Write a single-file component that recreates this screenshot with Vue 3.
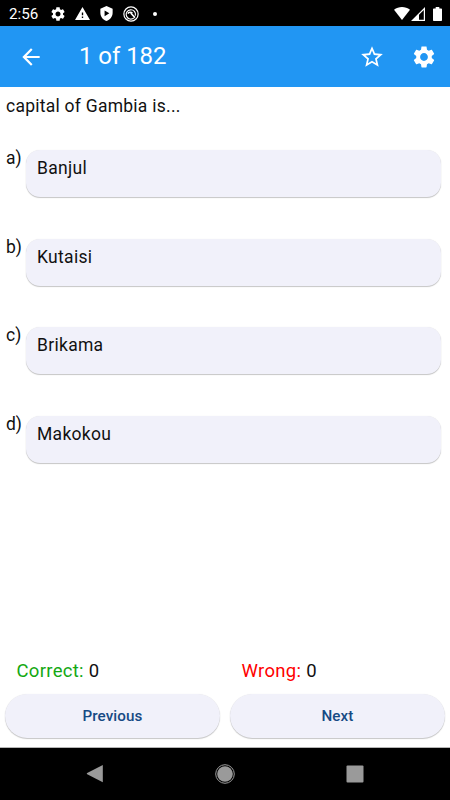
<template>
  <div class="screen">
    <div class="status-bar">
      <span class="clock">2:56</span>
      <svg class="status-icon gear" viewBox="2 2 20 20"><path :d="gearPath" /></svg>
      <svg class="status-icon warning" viewBox="1 2 22 19"><path d="M1 21h22L12 2 1 21zm12-3h-2v-2h2v2zm0-4h-2v-4h2v4z" /></svg>
      <svg class="status-icon shield" viewBox="3 1 18 22"><path fill-rule="evenodd" d="M12 1 3 5v6c0 5.550 3.840 10.740 9 12 5.160-1.260 9-6.450 9-12V5l-9-4zM9.200 7.500v8.500l7-4.250z" /></svg>
      <svg class="status-icon radar" viewBox="0 0 24 24">
        <circle cx="12" cy="12" r="10.700" />
        <path d="M16.500 17.800A7 7 0 1 1 18.500 14.500" />
        <path class="sweep" d="M11.500 10.500l6.500 7M7.500 11.500c1-2.500 4.500-3 6.500-.5" />
      </svg>
      <span class="dot"></span>
      <svg class="status-icon wifi" viewBox="0 0 16 13"><path d="M0 2.800C4.600-.8 11.400-.8 16 2.800L8 13z" /></svg>
      <svg class="status-icon signal" viewBox="0 0 14 14">
        <path fill-rule="evenodd" d="M0 14 14 0v14zM8 7.700v5.100h4.800V2.900z" />
      </svg>
      <svg class="status-icon battery" viewBox="0 0 9 14"><path d="M2.700 0h3.600v1.500H8.200a.8.800 0 0 1 .8.800v10.900a.8.800 0 0 1-.8.800H.8a.8.800 0 0 1-.8-.8V2.300a.8.800 0 0 1 .8-.8h1.900z" /></svg>
    </div>

    <header class="app-bar">
      <svg class="icon" viewBox="0 0 24 24"><path d="M20 11H7.830l5.590-5.590L12 4l-8 8 8 8 1.410-1.410L7.830 13H20v-2z" /></svg>
      <h1 class="title">{{ current }} of {{ total }}</h1>
      <svg class="icon star" viewBox="0 0 24 24"><path d="M22 9.240l-7.190-.62L12 2 9.190 8.630 2 9.240l5.460 4.730L5.820 21 12 17.270 18.180 21l-1.630-7.030L22 9.240zM12 15.400l-3.760 2.270 1-4.280-3.320-2.880 4.380-.38L12 6.100l1.710 4.040 4.380.38-3.320 2.880 1 4.280L12 15.400z" /></svg>
      <svg class="icon" viewBox="0 0 24 24"><path :d="gearPath" /></svg>
    </header>

    <main class="quiz">
      <p class="question">capital of Gambia is...</p>
      <div v-for="option in options" :key="option.key" class="option">
        <span class="option-key">{{ option.key }})</span>
        <div class="option-card">{{ option.text }}</div>
      </div>
    </main>

    <footer class="footer">
      <div class="scores">
        <div class="score"><span class="correct">Correct:</span> {{ correct }}</div>
        <div class="score"><span class="wrong">Wrong:</span> {{ wrong }}</div>
      </div>
      <div class="buttons">
        <button class="button" @click="previous">Previous</button>
        <button class="button" @click="next">Next</button>
      </div>
    </footer>

    <nav class="nav-bar">
      <svg viewBox="0 0 20 20"><path d="M17.800 1v17.200L2.200 10.300a.7.700 0 0 1 0-1.200z" /></svg>
      <svg viewBox="0 0 20 20">
        <circle cx="10" cy="10" r="7.800" />
        <circle class="ring" cx="10" cy="10" r="9.300" />
      </svg>
      <svg viewBox="0 0 20 20"><rect x="1.500" y="1.500" width="17" height="17" rx="1" /></svg>
    </nav>
  </div>
</template>

<script setup>
import { ref } from 'vue'

const total = 182
const current = ref(1)
const correct = ref(0)
const wrong = ref(0)

const options = [
  { key: 'a', text: 'Banjul' },
  { key: 'b', text: 'Kutaisi' },
  { key: 'c', text: 'Brikama' },
  { key: 'd', text: 'Makokou' }
]

// shared by the status bar and the app bar
const gearPath = 'M19.140 12.940c.04-.3.06-.61.06-.94 0-.32-.02-.64-.07-.94l2.030-1.580c.18-.14.23-.41.12-.61l-1.920-3.320c-.12-.22-.37-.29-.59-.22l-2.390.96c-.5-.38-1.030-.7-1.620-.94l-.36-2.540c-.04-.24-.24-.41-.48-.41h-3.840c-.24 0-.43.17-.47.41l-.36 2.540c-.59.24-1.130.57-1.620.94l-2.390-.96c-.22-.08-.47 0-.59.22L2.740 8.870c-.12.21-.08.47.12.61l2.030 1.580c-.05.3-.09.63-.09.94s.02.64.07.94l-2.030 1.580c-.18.14-.23.41-.12.61l1.920 3.320c.12.22.37.29.59.22l2.390-.96c.5.38 1.030.7 1.620.94l.36 2.540c.05.24.24.41.48.41h3.840c.24 0 .44-.17.47-.41l.36-2.540c.59-.24 1.130-.56 1.620-.94l2.390.96c.22.08.47 0 .59-.22l1.920-3.320c.12-.22.07-.47-.12-.61l-2.010-1.580zM12 15.600c-1.980 0-3.600-1.620-3.600-3.600s1.620-3.600 3.600-3.600 3.600 1.620 3.600 3.600-1.620 3.600-3.600 3.600z'

function previous() {
  if (current.value > 1) current.value--
}

function next() {
  if (current.value < total) current.value++
}
</script>

<style>
body {
  margin: 0;
}
</style>

<style scoped>
.screen {
  display: flex;
  flex-direction: column;
  width: 450px;
  height: 800px;
  overflow: hidden;
  background: #fff;
  color: #111;
  font-family: Roboto, sans-serif;
  font-size: 17.500px;
  letter-spacing: 0.300px;
}

.status-bar {
  display: flex;
  align-items: center;
  box-sizing: border-box;
  height: 26px;
  padding: 1px 8px 0 9px;
  background: #000;
  color: #fff;
}

.clock {
  width: 42px;
  font-size: 15.200px;
  letter-spacing: 0;
}

.status-icon {
  flex: none;
  fill: #fff;
}

.gear {
  width: 14px;
  height: 14px;
}

.warning {
  width: 15px;
  height: 13px;
  margin-left: 9.500px;
}

.shield {
  width: 13px;
  height: 15px;
  margin-left: 10px;
}

.radar {
  width: 16px;
  height: 16px;
  margin-left: 10px;
  fill: none;
  stroke: #fff;
  stroke-width: 1.800;
}

.radar .sweep {
  stroke-width: 2.400;
}

.dot {
  width: 4px;
  height: 4px;
  margin-left: 14px;
  border-radius: 50%;
  background: #fff;
}

.wifi {
  width: 16px;
  height: 13px;
  margin-left: auto;
}

.signal {
  width: 14px;
  height: 14px;
  margin-left: 1px;
}

.battery {
  width: 9px;
  height: 14px;
  margin-left: 8px;
}

.app-bar {
  display: flex;
  align-items: center;
  box-sizing: border-box;
  height: 61px;
  padding: 0 13px 0 18px;
  background: #2196f3;
  color: #fff;
}

.icon {
  flex: none;
  width: 26px;
  height: 26px;
  fill: currentColor;
}

.title {
  flex: 1;
  margin: 0 0 1px 35px;
  font-size: 24px;
  font-weight: 400;
  letter-spacing: -0.050px;
}

.star {
  margin-right: 26.500px;
}

.quiz {
  flex: 1;
  padding: 6px 9px 0 6px;
}

.question {
  height: 57px;
  margin: 0;
  line-height: 26px;
  letter-spacing: 0.250px;
}

.option {
  display: flex;
  align-items: flex-start;
  height: 88.500px;
}

.option-key {
  flex: none;
  width: 20px;
  margin-top: -5px;
  line-height: 26px;
  letter-spacing: 0;
}

.option-card {
  flex: 1;
  box-sizing: border-box;
  height: 47px;
  padding: 5px 11px;
  border-radius: 14px;
  background: #f1f1fa;
  box-shadow: 0 1px 1px rgba(0, 0, 0, 0.220), 0 0 1px rgba(0, 0, 0, 0.100);
  line-height: 26px;
}

.scores {
  display: flex;
  padding-bottom: 10px;
  font-size: 18.500px;
  line-height: 26px;
}

.score {
  flex: 1;
  padding-left: 16.500px;
}

.correct {
  color: #13a813;
}

.wrong {
  color: #f00;
}

.buttons {
  display: flex;
  gap: 10px;
  padding: 0 5px 9px;
  border-bottom: 1px solid #b5b5b5;
}

.button {
  flex: 1;
  height: 44px;
  padding: 0;
  border: none;
  border-radius: 22px;
  background: #f1f1fa;
  box-shadow: 0 1px 1px rgba(0, 0, 0, 0.220), 0 0 1px rgba(0, 0, 0, 0.100);
  color: #164a84;
  font: 500 15.200px Roboto, sans-serif;
  letter-spacing: 0.100px;
}

.nav-bar {
  display: flex;
  align-items: center;
  justify-content: space-between;
  box-sizing: border-box;
  height: 52px;
  padding: 0 85px 0 84.500px;
  background: #000;
}

.nav-bar svg {
  width: 20px;
  height: 20px;
  fill: #9a9a9a;
}

.nav-bar .ring {
  fill: none;
  stroke: #9a9a9a;
}
</style>
